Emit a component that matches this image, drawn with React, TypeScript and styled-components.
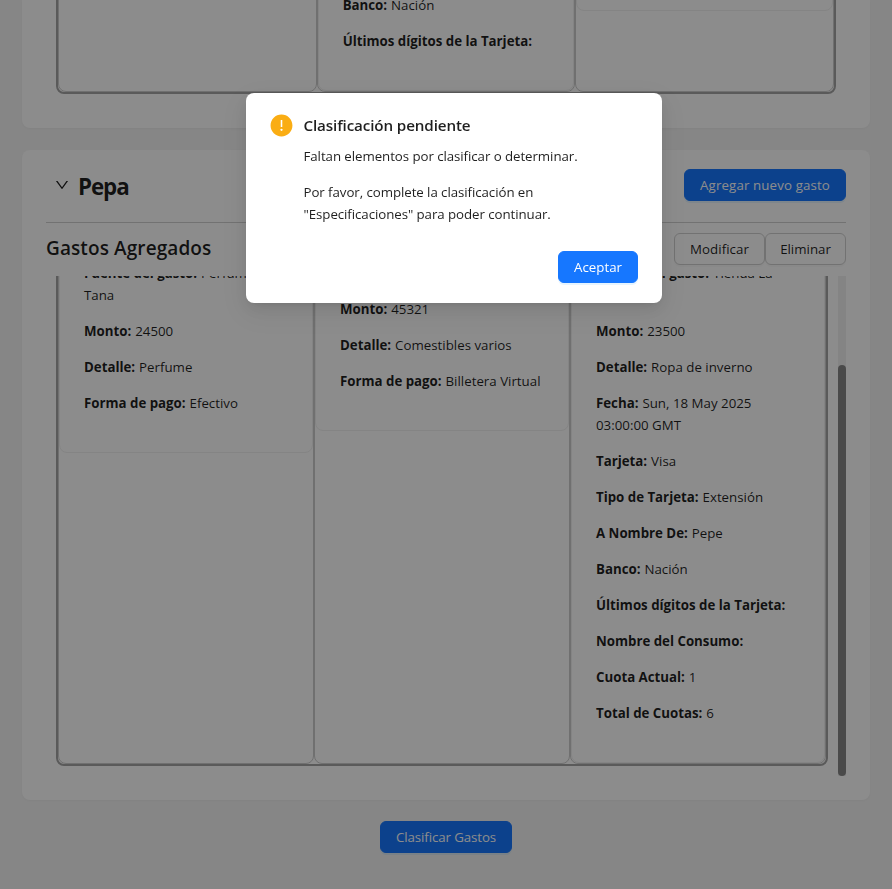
import React from "react";
import styled, { createGlobalStyle } from "styled-components";
import { AiFillExclamationCircle, AiOutlineDown } from "react-icons/ai";

const GlobalStyle = createGlobalStyle`
  * { box-sizing: border-box; }
  html, body { margin: 0; padding: 0; overflow: hidden; }
  body {
    background: #f5f5f5;
    color: rgba(0, 0, 0, 0.88);
    font-family: "Open Sans", "Noto Sans", sans-serif;
    font-size: 13.3px;
    line-height: 22px;
  }
  h2, h3, p { margin: 0; }
`;

const Page = styled.main`
  height: 889px;
  padding: 0 22px;
  overflow: hidden;
  display: flex;
  flex-direction: column;
`;

const Card = styled.section<{ $height: number; $first?: boolean }>`
  flex: none;
  height: ${(p) => p.$height}px;
  padding: 0 24px 24px;
  margin-bottom: 22px;
  background: #fff;
  border-radius: ${(p) => (p.$first ? "0 0 8px 8px" : "8px")};
  box-shadow: 0 1px 2px rgba(0, 0, 0, 0.03), 0 1px 6px -1px rgba(0, 0, 0, 0.02);
  display: flex;
  flex-direction: column;
  overflow: hidden;
`;

const CardHeader = styled.header`
  flex: none;
  height: 73px;
  padding: 0 0 2px 8px;
  border-bottom: 1px solid #d0d0d0;
  display: flex;
  align-items: center;
`;

const Chevron = styled(AiOutlineDown)`
  width: 16px;
  height: 16px;
  margin-right: 8px;
`;

const PersonName = styled.h2`
  flex: 1;
  font-size: 22.4px;
  line-height: 30px;
  font-weight: 700;
  letter-spacing: -1.1px;
  padding-top: 3px;
`;

const ListHeader = styled.div`
  flex: none;
  height: 53px;
  padding-bottom: 1px;
  display: flex;
  align-items: center;
`;

const ListTitle = styled.h3`
  flex: 1;
  font-size: 19px;
  line-height: 28px;
  font-weight: 600;
  letter-spacing: 0.1px;
  padding-bottom: 2px;
`;

const Button = styled.button<{ $primary?: boolean; $width: number; $spacing?: number }>`
  width: ${(p) => p.$width}px;
  height: 32px;
  padding: 0;
  border: 1px solid ${(p) => (p.$primary ? "#1677ff" : "#d0d0d0")};
  border-radius: 6px;
  background: ${(p) => (p.$primary ? "#1677ff" : "#fff")};
  color: ${(p) => (p.$primary ? "#fff" : "rgba(0, 0, 0, 0.88)")};
  box-shadow: 0 2px 0 ${(p) => (p.$primary ? "rgba(5, 145, 255, 0.1)" : "rgba(0, 0, 0, 0.02)")};
  font: inherit;
  letter-spacing: ${(p) => p.$spacing ?? 0}px;
  white-space: nowrap;
`;

const Scroller = styled.div`
  flex: 1;
  min-height: 0;
  display: flex;
`;

const Viewport = styled.div`
  flex: 1;
  min-width: 0;
  padding: 0 10px 10px;
  display: flex;
  flex-direction: column;
  justify-content: flex-end;
  overflow: hidden;
`;

const Track = styled.div`
  width: 8px;
  background: #f1f1f1;
  display: flex;
  align-items: flex-end;
`;

const Thumb = styled.div`
  width: 8px;
  height: 411px;
  border-radius: 4px;
  background: #888;
`;

const Columns = styled.div`
  flex: none;
  display: grid;
  grid-template-columns: repeat(3, minmax(0, 1fr));
  border: 2px solid #a4a4a4;
  border-radius: 8px;
`;

const Column = styled.div`
  border: 1px solid #ccc;
  border-radius: 8px;
`;

const Expense = styled.article<{ $height?: number }>`
  height: ${(p) => (p.$height ? `${p.$height}px` : "auto")};
  padding: 80px 24px 24px;
  border: 1px solid #f0f0f0;
  border-radius: 8px;
`;

const Field = styled.p`
  margin-bottom: 14px;
  b { font-weight: 700; letter-spacing: -0.02px; margin-right: 0.5px; }
`;

const Footer = styled.footer`
  display: flex;
  justify-content: center;
  margin-top: -1px;
`;

const Mask = styled.div`
  position: fixed;
  inset: 0;
  background: rgba(0, 0, 0, 0.45);
`;

const Dialog = styled.div`
  position: fixed;
  left: 246px;
  top: 93px;
  width: 416px;
  height: 210px;
  padding: 20px 24px;
  border-radius: 8px;
  background: #fff;
  box-shadow: 0 6px 16px rgba(0, 0, 0, 0.08), 0 3px 6px -4px rgba(0, 0, 0, 0.12),
    0 9px 28px 8px rgba(0, 0, 0, 0.05);
  display: flex;
  flex-direction: column;
  justify-content: space-between;
`;

const DialogBody = styled.div`
  display: grid;
  grid-template-columns: 22px 1fr;
  column-gap: 11.5px;
`;

const WarningIcon = styled(AiFillExclamationCircle)`
  width: 25px;
  height: 25px;
  margin: -0.5px -1.5px;
  color: #faad14;
`;

const DialogTitle = styled.h3`
  font-size: 15.2px;
  line-height: 24px;
  font-weight: 600;
  letter-spacing: -0.12px;
  margin-bottom: 8px;
`;

const DialogText = styled.p`
  margin-bottom: 14px;
  letter-spacing: -0.07px;
`;

const DialogActions = styled.div`
  display: flex;
  justify-content: flex-end;
  button { font-weight: 500; }
`;

type Row = [label: string, value?: string];
type Item = { rows: Row[]; height?: number };

const cardRows: Row[] = [
  ["Tarjeta", "Visa"],
  ["Tipo de Tarjeta", "Extensión"],
  ["A Nombre De", "Pepe"],
  ["Banco", "Nación"],
  ["Últimos dígitos de la Tarjeta"],
];

const pepe: Item[] = [
  { rows: [] },
  { rows: [["Monto", "12000"], ["Detalle", "Varios"], ...cardRows] },
  { rows: [], height: 278 },
];

const pepa: Item[] = [
  {
    rows: [
      ["Fuente del gasto", "Perfumería Tana"],
      ["Monto", "24500"],
      ["Detalle", "Perfume"],
      ["Forma de pago", "Efectivo"],
    ],
  },
  {
    rows: [
      ["Fuente del gasto", "Almacén"],
      ["Monto", "45321"],
      ["Detalle", "Comestibles varios"],
      ["Forma de pago", "Billetera Virtual"],
    ],
  },
  {
    rows: [
      ["Fuente del gasto", "Tienda La Feria"],
      ["Monto", "23500"],
      ["Detalle", "Ropa de inverno"],
      ["Fecha", "Sun, 18 May 2025 03:00:00 GMT"],
      ...cardRows,
      ["Nombre del Consumo"],
      ["Cuota Actual", "1"],
      ["Total de Cuotas", "6"],
    ],
  },
];

function ExpenseColumns({ items }: { items: Item[] }) {
  return (
    <Columns>
      {items.map((item, i) => (
        <Column key={i}>
          <Expense $height={item.height}>
            {item.rows.map(([label, value]) => (
              <Field key={label}>
                <b>{label}:</b> {value}
              </Field>
            ))}
          </Expense>
        </Column>
      ))}
    </Columns>
  );
}

export default function App() {
  return (
    <>
      <GlobalStyle />
      <Page>
        <Card $height={128} $first>
          <Scroller>
            <Viewport>
              <ExpenseColumns items={pepe} />
            </Viewport>
          </Scroller>
        </Card>
        <Card $height={650}>
          <CardHeader>
            <Chevron />
            <PersonName>Pepa</PersonName>
            <Button $primary $width={162} $spacing={0.12}>Agregar nuevo gasto</Button>
          </CardHeader>
          <ListHeader>
            <ListTitle>Gastos Agregados</ListTitle>
            <Button $width={91} $spacing={0.05}>Modificar</Button>
            <Button $width={81}>Eliminar</Button>
          </ListHeader>
          <Scroller>
            <Viewport>
              <ExpenseColumns items={pepa} />
            </Viewport>
            <Track>
              <Thumb />
            </Track>
          </Scroller>
        </Card>
        <Footer>
          <Button $primary $width={132} $spacing={-0.1}>Clasificar Gastos</Button>
        </Footer>
      </Page>
      <Mask />
      <Dialog role="dialog">
        <DialogBody>
          <WarningIcon />
          <div>
            <DialogTitle>Clasificación pendiente</DialogTitle>
            <DialogText>Faltan elementos por clasificar o determinar.</DialogText>
            <DialogText>
              Por favor, complete la clasificación en
              <br />
              "Especificaciones" para poder continuar.
            </DialogText>
          </div>
        </DialogBody>
        <DialogActions>
          <Button $primary $width={80}>Aceptar</Button>
        </DialogActions>
      </Dialog>
    </>
  );
}
